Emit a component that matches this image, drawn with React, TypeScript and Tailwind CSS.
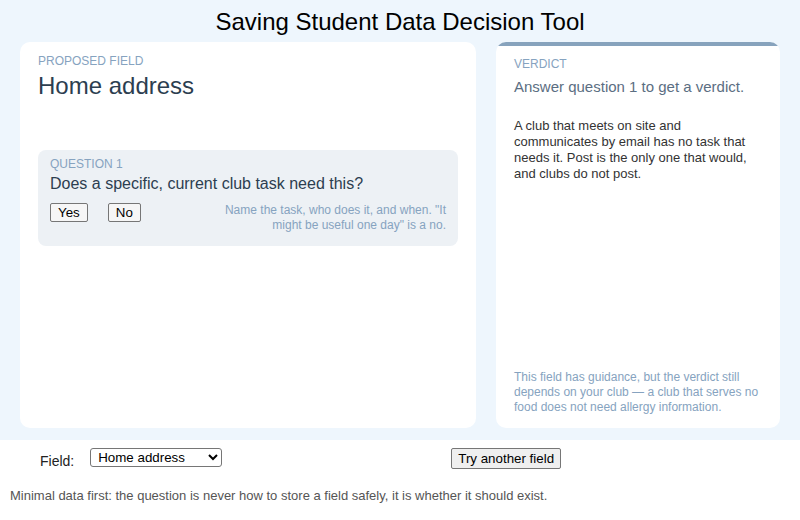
import React from "react";

export default function App() {
  return (
    <div className="w-[800px] h-[520px] bg-white font-['Liberation_Sans',Arial,sans-serif] overflow-hidden">
      <div className="bg-[#eef6fd] h-[440px] flex flex-col">
        <div className="h-[42px] flex items-center justify-center text-[24px] text-black leading-none pt-[1px]">
          Saving Student Data Decision Tool
        </div>
        <div className="grid grid-cols-[456px_284px] gap-5 px-5 h-[386px]">
          <div className="bg-white rounded-[10px] px-[18px] pt-[12px] flex flex-col">
            <div className="text-[12px] leading-[14px] text-[#86a3c0] uppercase">Proposed field</div>
            <div className="text-[24px] leading-[28px] text-[#2c3e50] mt-[4px]">Home address</div>
            <div className="mt-[50px] bg-[#edf1f5] rounded-[8px] pl-[12px] pr-[12px] pt-[7px] pb-[13px]">
              <div className="text-[12px] leading-[14px] text-[#86a3c0] uppercase">Question 1</div>
              <div className="text-[16px] leading-[20px] text-[#2c3e50] mt-[3px]">
                Does a specific, current club task need this?
              </div>
              <div className="flex items-start justify-between mt-[9px]">
                <div className="flex gap-5">
                  <button className="h-[19px] px-[7px] text-[13.333px] leading-[15px] text-black bg-[#f6f6f6] border border-[#767676] rounded-[2px]">
                    Yes
                  </button>
                  <button className="h-[19px] px-[7px] text-[13.333px] leading-[15px] text-black bg-[#f6f6f6] border border-[#767676] rounded-[2px]">
                    No
                  </button>
                </div>
                <div className="text-[12px] leading-[15px] text-[#86a3c0] text-right w-[232px] mt-[0px]">
                  Name the task, who does it, and when. "It might be useful one day" is a no.
                </div>
              </div>
            </div>
          </div>
          <div className="bg-white rounded-[10px] overflow-hidden flex flex-col">
            <div className="h-[4px] bg-[#87a3bd] rounded-full"></div>
            <div className="px-[18px] pt-[11px] pb-[13px] flex flex-col flex-1">
              <div className="text-[12px] leading-[14px] text-[#86a3c0] uppercase">Verdict</div>
              <div className="text-[15px] leading-[18px] text-[#5b6e82] mt-[7px]">
                Answer question 1 to get a verdict.
              </div>
              <div className="text-[13px] leading-[16px] text-[#333] mt-[22px] pr-[2px]">
                A club that meets on site and communicates by email has no task that needs it. Post is the only one that would, and clubs do not post.
              </div>
              <div className="flex-1"></div>
              <div className="text-[12px] leading-[15px] text-[#86a3c0]">
                This field has guidance, but the verdict still depends on your club — a club that serves no food does not need allergy information.
              </div>
            </div>
          </div>
        </div>
      </div>
      <div className="flex items-start h-[30px] pt-[8px]">
        <div className="text-[14px] leading-[16px] text-[#222] ml-[40px] mt-[5px]">Field:</div>
        <select className="ml-[16px] w-[132px] h-[19px] text-[13.333px] leading-[15px] text-black bg-white border border-[#767676] rounded-[3px] pl-[3px]">
          <option>Home address</option>
        </select>
        <button className="ml-[229px] h-[21px] px-[6px] text-[13.333px] leading-[15px] text-black bg-[#efefef] border border-[#767676] rounded-[2px]">
          Try another field
        </button>
      </div>
      <div className="text-[13px] leading-[15px] text-[#555] ml-[10px] mt-[18px]">
        Minimal data first: the question is never how to store a field safely, it is whether it should exist.
      </div>
    </div>
  );
}
